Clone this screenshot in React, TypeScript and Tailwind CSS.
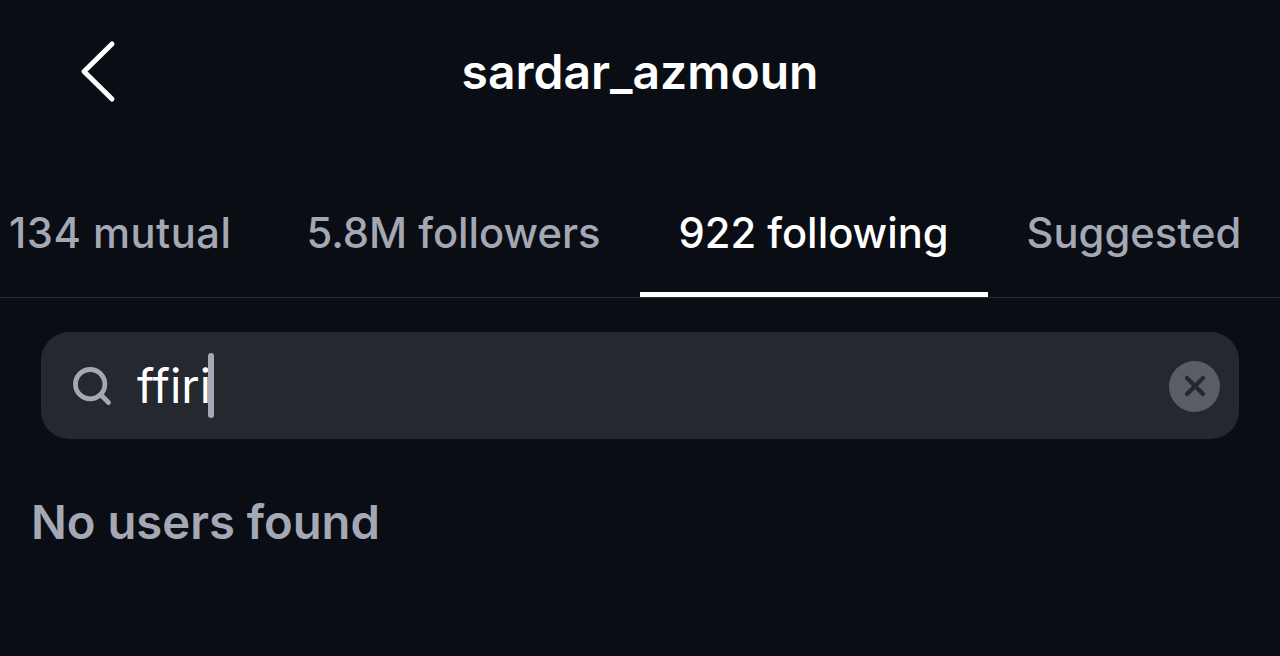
import { Search, X } from 'lucide-react'

const font = { sans: 'font-["Inter","Liberation_Sans",sans-serif]' }

// Tab row runs past the left edge, so the first label starts almost at the screen edge
const tabs = [
  { label: '134 mutual', active: false, spacing: 'pr-[36px] tracking-[0.5px]' },
  { label: '5.8M followers', active: false, spacing: '' },
  { label: '922 following', active: true, spacing: '' },
  { label: 'Suggested', active: false, spacing: '' },
]

function BackIcon() {
  return (
    <svg width="40" height="64" viewBox="0 0 40 64" fill="none" className="text-white">
      <path
        d="M33 4 L5 31.5 L33 59"
        stroke="currentColor"
        strokeWidth="5"
        strokeLinecap="round"
        strokeLinejoin="round"
      />
    </svg>
  )
}

export default function App() {
  return (
    <div className={`${font.sans} h-[656px] w-[1280px] overflow-hidden bg-[#0a0d14]`}>
      {/* Header */}
      <header className="relative flex h-[145px] items-center justify-center pb-[2px]">
        <div className="absolute left-[79px] top-[40px]">
          <BackIcon />
        </div>
        <h1 className="text-[48px] leading-none font-semibold text-white">sardar_azmoun</h1>
      </header>

      {/* Tabs */}
      <nav className="flex h-[153px] border-b border-[#262a30]">
        <div className="-ml-[30px] flex">
          {tabs.map((tab) => (
            <div
              key={tab.label}
              className={`flex items-center whitespace-nowrap border-b-[5px] px-[39px] pb-[16px] pt-[47px] text-[41.7px] leading-none font-medium ${tab.spacing} ${
                tab.active ? 'border-white text-white' : 'border-transparent text-[#a4a8b5]'
              }`}
            >
              {tab.label}
            </div>
          ))}
        </div>
      </nav>

      {/* Search */}
      <div className="mx-[41px] mt-[34px] flex h-[107px] items-center rounded-[28px] bg-[#25282e] pl-[30px] pr-[19px]">
        <Search size={44} strokeWidth={2.6} className="-ml-[1px] text-[#a4a8b5]" />
        <div className="ml-[23px] flex flex-1 items-center">
          <span className="text-[47px] leading-none font-normal text-white">ffiri</span>
          <span className="-ml-[3px] h-[65px] w-[6px] rounded-full bg-[#a4a8b5]" />
        </div>
        <div className="mt-[1px] flex h-[51px] w-[51px] items-center justify-center rounded-full bg-[#5a5d66]">
          <X size={32} strokeWidth={3.2} className="text-[#25282e]" />
        </div>
      </div>

      {/* Empty state */}
      <p className="ml-[31px] mt-[57px] text-[47.2px] leading-[52px] font-semibold text-[#a4a8b5]">
        No users found
      </p>
    </div>
  )
}
